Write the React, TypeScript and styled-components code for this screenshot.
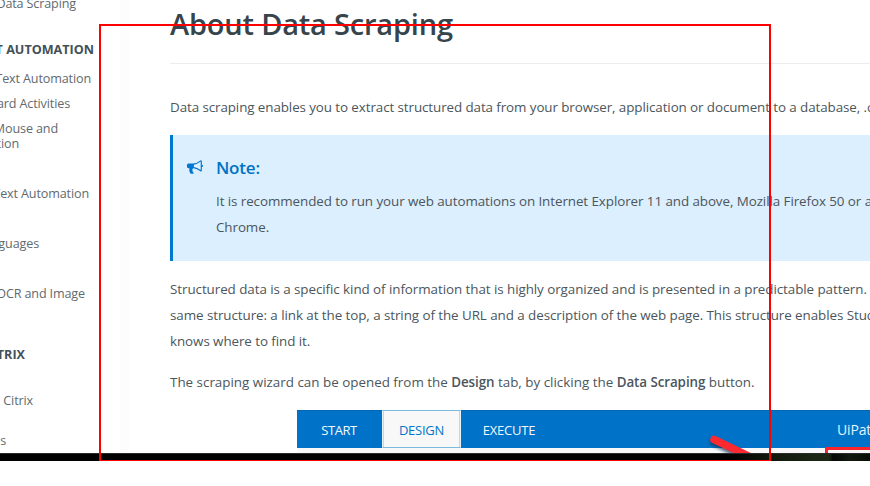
import React from 'react';
import styled, { createGlobalStyle } from 'styled-components';

const GlobalStyle = createGlobalStyle`
  body { margin: 0; background: #fff; overflow: hidden; }
  * { box-sizing: border-box; }
`;

const Screen = styled.div`
  position: relative;
  width: 870px;
  height: 486px;
  overflow: hidden;
  background: #fff;
  font-family: 'Open Sans', 'Noto Sans', sans-serif;
  color: #4b565c;
`;

const Page = styled.div`
  display: flex;
  height: 453px;
  overflow: hidden;
`;

const Sidebar = styled.nav`
  display: flex;
  flex-direction: column;
  flex: 0 0 129px;
  padding-right: 9px;
  background: linear-gradient(90deg, #fff 120px, #fdfdfd 120px);
`;

const NavItem = styled.div<{ $end: number; $gap: number; $heading?: boolean }>`
  display: flex;
  flex: none;
  justify-content: flex-end;
  width: ${(p) => p.$end}px;
  height: 15px;
  margin-top: ${(p) => p.$gap}px;
  white-space: nowrap;
  line-height: 15px;
  font-size: 12.6px;
  letter-spacing: ${(p) => (p.$heading ? '0' : '-0.14px')};
  font-weight: ${(p) => (p.$heading ? 700 : 400)};
  color: ${(p) => (p.$heading ? '#435058' : '#626a6e')};
`;

const Article = styled.main`
  flex: 1;
  min-width: 0;
  padding-left: 41px;
  overflow: hidden;
`;

const Title = styled.h1`
  height: 64px;
  margin: 0;
  padding-top: 4px;
  border-bottom: 1px solid #ededee;
  line-height: 40px;
  font-size: 29px;
  font-weight: 600;
  letter-spacing: -0.2px;
  color: #37444c;
`;

const Line = styled.div<{ $tracking?: number }>`
  height: 26px;
  line-height: 26px;
  font-size: 13.4px;
  letter-spacing: ${(p) => p.$tracking ?? -0.075}px;
  white-space: nowrap;
`;

const Paragraph = styled.div<{ $top: number }>`
  margin-top: ${(p) => p.$top}px;
`;

const Strong = styled.strong`
  font-weight: 600;
  letter-spacing: -0.08px;
`;

const Note = styled.section`
  display: flex;
  height: 126px;
  margin-top: 15px;
  padding: 20px 0 0 14px;
  border-left: 3px solid #0079d0;
  background: #dceffe;
`;

const NoteIcon = styled.svg`
  flex: none;
  width: 16px;
  height: 16px;
  margin: 4px 13px 0 0;
  fill: #0076cf;
`;

const NoteTitle = styled.h2`
  height: 33px;
  margin: 0;
  line-height: 26px;
  font-size: 17px;
  font-weight: 600;
  letter-spacing: -0.2px;
  color: #0072c6;
`;

const Ribbon = styled.div`
  display: flex;
  height: 38px;
  margin: 15px 0 0 127px;
  background: #0073c8;
  border-top: 1px solid #0068b4;
`;

const Tab = styled.div<{ $width: number; $active?: boolean; $tracking: number }>`
  width: ${(p) => p.$width}px;
  height: ${(p) => (p.$active ? 38 : 37)}px;
  margin-top: ${(p) => (p.$active ? -1 : 0)}px;
  padding-right: ${(p) => (p.$active ? 0 : 1)}px;
  border: ${(p) => (p.$active ? '1px solid #7abbe0' : '0')};
  border-left-color: #e9f4fa;
  border-right-color: #e9f4fa;
  box-shadow: ${(p) => (p.$active ? 'inset 1px 0 #bad9e9, inset -1px 0 #bad9e9' : 'none')};
  background: ${(p) => (p.$active ? '#f8f8f8' : 'transparent')};
  color: ${(p) => (p.$active ? '#0076c8' : '#f1f8fd')};
  line-height: 38px;
  text-align: center;
  font-size: 13px;
  letter-spacing: ${(p) => p.$tracking}px;
`;

const AppName = styled.div`
  margin-left: auto;
  width: 33px;
  line-height: 38px;
  font-size: 14px;
  letter-spacing: -0.15px;
  white-space: nowrap;
  color: #e4f3fc;
`;

const RibbonBody = styled.div`
  height: 5px;
  margin-left: 127px;
  background: #f8f8f8;
`;

const Strip = styled.div`
  height: 8px;
  border-top: 1px solid #292c2d;
  background: linear-gradient(90deg, #000 732px, #090d06 750px, #10180b 772px, #172111 800px, #1d2915 829px, #050704 833px, #111a0e 850px, #090d08 870px);
`;

const Selection = styled.div`
  position: absolute;
  left: 99px;
  top: 24px;
  width: 672px;
  height: 437px;
  border: 2px solid #f00;
  border-bottom-width: 1px;
`;

const Callout = styled.div`
  position: absolute;
  left: 825px;
  top: 447px;
  width: 60px;
  height: 6px;
  border: solid #fb242b;
  border-width: 3px 0 0 3px;
  background: #f8f8f8;
`;

const Arrow = styled.svg`
  position: absolute;
  left: 700px;
  top: 425px;
`;

const navItems = [
  { text: 'Data Scraping', end: 76, gap: -4 },
  { text: 'T AUTOMATION', end: 94, gap: 31, heading: true },
  { text: 'Text Automation', end: 91, gap: 14 },
  { text: 'ard Activities', end: 70, gap: 10 },
  { text: 'Mouse and', end: 58, gap: 10 },
  { text: 'tion', end: 19, gap: 0 },
  { text: 'Text Automation', end: 89, gap: 35 },
  { text: 'guages', end: 39, gap: 35 },
  { text: 'OCR and Image', end: 85, gap: 35 },
  { text: 'TRIX', end: 25, gap: 46, heading: true },
  { text: 'Citrix', end: 33, gap: 31 },
  { text: 'ps', end: 6, gap: 25 },
];

export default function App() {
  return (
    <Screen>
      <GlobalStyle />
      <Page>
        <Sidebar>
          {navItems.map((item, i) => (
            <NavItem key={i} $end={item.end} $gap={item.gap} $heading={item.heading}>
              {item.text}
            </NavItem>
          ))}
        </Sidebar>
        <Article>
          <Title>About Data Scraping</Title>
          <Paragraph $top={30}>
            <Line $tracking={-0.09}>
              Data scraping enables you to extract structured data from your browser, application or document to a database, .csv
            </Line>
          </Paragraph>
          <Note>
            <NoteIcon viewBox="0 0 1792 1792">
              <path d="M1664 640q53 0 90.5 37.5t37.5 90.5-37.5 90.5-90.5 37.5v384q0 52-38 90t-90 38q-417-347-812-380-58 19-91 66t-31 100.5 40 92.5q-20 33-23 65.5t6 58 33.5 55 48 50 61.5 50.5q-29 58-111.5 83t-168.5 11.5-132-55.5q-7-23-29.5-87.5t-32-94.5-23-89-15-101 3.5-98.5 22-110.5h-122q-66 0-113-47t-47-113v-192q0-66 47-113t113-47h480q435 0 896-384 52 0 90 38t38 90v384zm-128 604v-954q-394 302-768 343v270q377 42 768 341z" />
            </NoteIcon>
            <div>
              <NoteTitle>Note:</NoteTitle>
              <Line>It is recommended to run your web automations on Internet Explorer 11 and above, Mozilla Firefox 50 or above,</Line>
              <Line>Chrome.</Line>
            </div>
          </Note>
          <Paragraph $top={15}>
            <Line $tracking={-0.063}>Structured data is a specific kind of information that is highly organized and is presented in a predictable pattern.</Line>
            <Line $tracking={-0.067}>same structure: a link at the top, a string of the URL and a description of the web page. This structure enables Studio</Line>
            <Line>knows where to find it.</Line>
          </Paragraph>
          <Paragraph $top={15}>
            <Line $tracking={0}>
              The scraping wizard can be opened from the <Strong>Design</Strong> tab, by clicking the <Strong>Data Scraping</Strong> button.
            </Line>
          </Paragraph>
          <Ribbon>
            <Tab $width={85} $tracking={-0.45}>START</Tab>
            <Tab $width={79} $tracking={-0.25} $active>DESIGN</Tab>
            <Tab $width={97} $tracking={-0.2}>EXECUTE</Tab>
            <AppName>UiPath</AppName>
          </Ribbon>
          <RibbonBody />
        </Article>
      </Page>
      <Strip />
      <Arrow width="60" height="28" viewBox="0 0 60 28">
        <defs>
          <filter id="soft" x="-20%" y="-20%" width="140%" height="160%">
            <feGaussianBlur stdDeviation="1.5" />
          </filter>
        </defs>
        <path d="M13 17L60 40" stroke="#14395b" strokeOpacity=".7" strokeWidth="7" strokeLinecap="round" filter="url(#soft)" />
        <path d="M14 14.5L60 36.5" stroke="#fc2a30" strokeWidth="7.5" strokeLinecap="round" />
      </Arrow>
      <Callout />
      <Selection />
    </Screen>
  );
}
